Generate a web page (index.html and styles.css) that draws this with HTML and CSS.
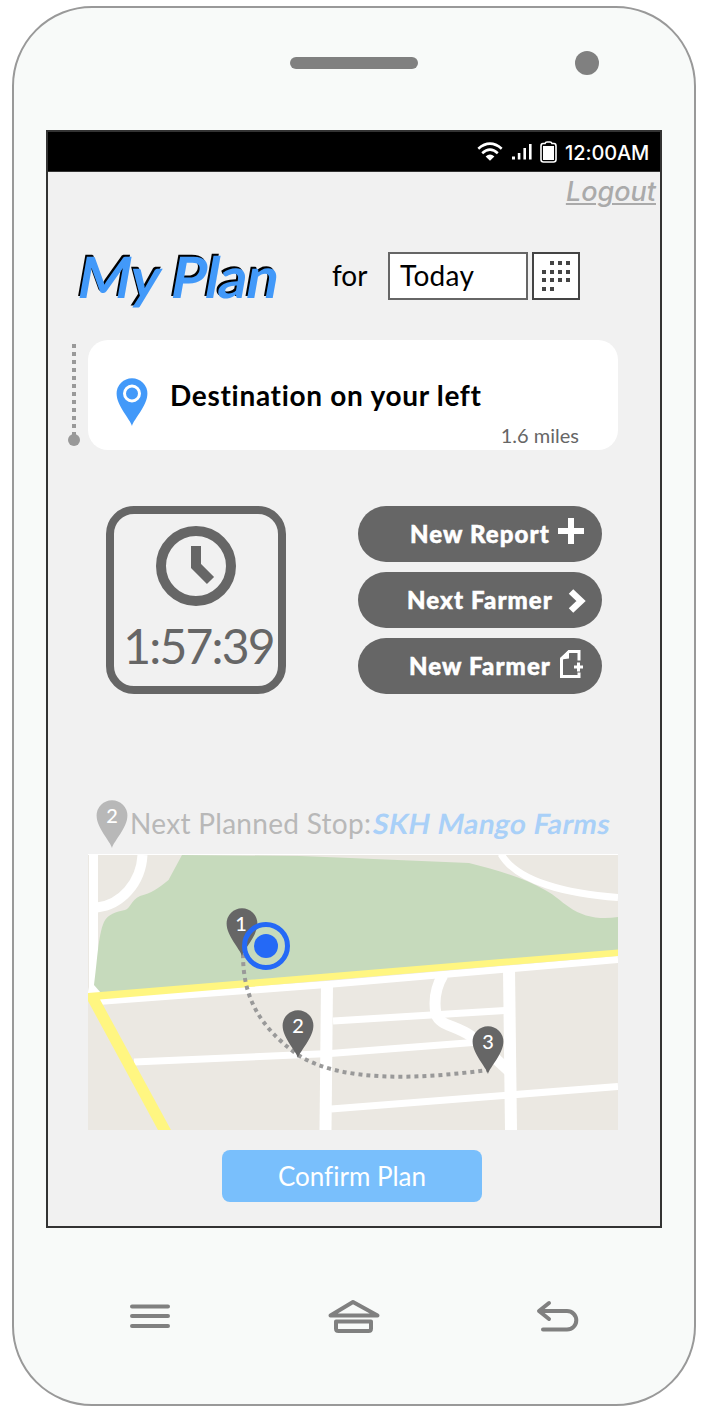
FILE: index.html
```html
<!DOCTYPE html>
<html lang="en">
<head>
<meta charset="utf-8">
<title>My Plan</title>
<link rel="stylesheet" href="styles.css">
</head>
<body>
<svg class="defs" width="0" height="0" aria-hidden="true">
  <symbol id="pin" viewBox="0 0 32 48"><path d="M16 48C14 41 .6 28 .6 15.6A15.4 15.4 0 0 1 31.4 15.6C31.4 28 18 41 16 48Z"/></symbol>
</svg>
<div class="phone">
  <div class="phone-top"><i class="speaker"></i><i class="camera"></i></div>
  <main class="screen">
    <div class="status">
      <svg class="wifi" width="26" height="20" viewBox="0 0 26 20" fill="none" stroke="#fff" stroke-width="2.6"><path d="M1.300 6.700Q13-3.300 24.700 6.700M5.200 11.200Q13 4.200 20.800 11.200"/><path d="M13 18.800L8.600 14.600Q13 10.600 17.400 14.600Z" fill="#fff" stroke="none"/></svg>
      <svg class="signal" width="20" height="16" viewBox="0 0 20 16" fill="#fff"><path d="M0 12.500h3v3H0zM5.800 9h2.600v6.500H5.800zM11.400 4h2.600v11.500h-2.600zM17 0h2.600v15.500H17z"/></svg>
      <svg class="battery" width="17" height="22" viewBox="0 0 17 22"><path d="M3 2.500H5Q5.500 1 7 1H10Q11.500 1 12 2.500H14Q16 2.500 16 5V18.500Q16 21 13.500 21H3.500Q1 21 1 18.500V5Q1 2.500 3 2.500Z" fill="none" stroke="#fff" stroke-width="1.600"/><path d="M3 5H14V19H3Z" fill="#fff"/></svg>
      <span class="clock-text">12:00AM</span>
    </div>
    <div class="logout">Logout</div>
    <div class="title-row">
      <h1 class="title"><span class="slant">My Plan</span></h1>
      <span class="for">for</span>
      <div class="date">Today</div>
      <div class="cal">
        <svg width="44" height="44" viewBox="0 0 44 44" fill="#444"><path d="M16 7h4v4h-4zM24 7h4v4h-4zM32 7h4v4h-4zM8 16h4v4H8zM16 16h4v4h-4zM24 16h4v4h-4zM32 16h4v4h-4zM8 24h4v4H8zM16 24h4v4h-4zM24 24h4v4h-4zM32 24h4v4h-4zM8 33h4v4H8zM16 33h4v4h-4z"/></svg>
      </div>
    </div>
    <section class="nav-row">
      <svg class="trail" width="12" height="102" viewBox="0 0 12 102"><path d="M6 0V92" stroke="#999" stroke-width="4" stroke-dasharray="4 4"/><circle cx="6" cy="96" r="6" fill="#999"/></svg>
      <div class="card">
        <svg class="card-pin" width="32" height="48" viewBox="0 0 32 48"><use href="#pin" fill="#4299f9"/><circle cx="16" cy="15.500" r="7.500" fill="none" stroke="#fff" stroke-width="3"/></svg>
        <span class="dest">Destination on your left</span>
        <span class="miles">1.6 miles</span>
      </div>
    </section>
    <section class="actions">
      <div class="timer">
        <svg width="80" height="80" viewBox="0 0 80 80" fill="none" stroke="#666" stroke-width="10"><circle cx="40" cy="40" r="35"/><path d="M40 20V40L54.500 54.500"/></svg>
        <span class="elapsed">1:57:39</span>
      </div>
      <div class="buttons">
        <div class="btn b1"><span>New Report</span><svg width="26" height="26" viewBox="0 0 26 26"><path d="M13 3V23M3 13H23" stroke="#fff" stroke-width="6" stroke-linecap="square"/></svg></div>
        <div class="btn b2"><span>Next Farmer</span><svg width="18" height="26" viewBox="0 0 18 26"><path d="M3 3.500L13 13L3 22.500" fill="none" stroke="#fff" stroke-width="6.500"/></svg></div>
        <div class="btn b3"><span>New Farmer</span><svg width="24" height="28" viewBox="0 0 24 28" fill="none" stroke="#fff"><path d="M19 10.500V1.500H9L1.500 9V26.500H19V22.500" stroke-width="3"/><path d="M9 0V8.500L1 9.500L0 8Z" fill="#fff" stroke="none"/><path d="M18.500 12.500V21.500M14 17H23" stroke-width="3"/></svg></div>
      </div>
    </section>
    <div class="next">
      <svg width="32" height="48" viewBox="0 0 32 48"><use href="#pin" fill="#b8b8b8"/><text class="pin-n" x="16" y="23">2</text></svg>
      <span class="next-label">Next Planned Stop:</span><span class="farm slant">SKH Mango Farms</span>
    </div>
    <svg class="map" width="530" height="276" viewBox="88 854 530 276">
      <rect x="88" y="854" width="530" height="276" fill="#ebe8e2"/>
      <path d="M93.500 854V993M95 980L103 995H92Z" fill="#fff" stroke="#fff" stroke-width="9"/>
      <path d="M182 855L168.500 880C157 889 152 893 140 896C131 900 130 909 125 910C116 912 108 914 104 922C98 935 97 965 94 985L101 993L618 951V917C600 920 583 917 569 907C560 901 556 896 545 890C524 878 497 870 469 863L350 858L300 856Z" fill="#c6dabc"/>
      <g fill="none" stroke="#fff">
        <path d="M142.500 855C141 883 121 905 97 907.500" stroke-width="10"/>
        <path d="M501 854C517 882 568 894 618 897.500" stroke-width="7"/>
        <path d="M98 1001.500L333 984L618 959.500" stroke-width="7"/>
        <path d="M327 984L325.500 1130" stroke-width="12"/>
        <path d="M509 969L511 1130" stroke-width="12"/>
        <path d="M134 1062L330 1053.500L473 1042.500" stroke-width="7"/>
        <path d="M333 1021L505 1010.500" stroke-width="7"/>
        <path d="M331 1109L618 1086.500" stroke-width="7"/>
        <path d="M443 975C434 990 434 1003 436 1014C440 1026 455 1025 471 1036L510 1072" stroke-width="11"/>
        <path d="M88 854.500H618" stroke-width="1"/>
      </g>
      <path d="M88 993L618 949.500V956L100 999.500L171 1130H158L88 1001Z" fill="#fff681"/>
      <path d="M243 954C243 995 257 1025 298 1055M298 1055C342 1083 420 1079 488 1070" fill="none" stroke="#999" stroke-width="4" stroke-dasharray="4 4"/>
      <g fill="#666">
        <use href="#pin" x="226" y="908" width="32" height="48"/>
        <use href="#pin" x="282" y="1010" width="32" height="48"/>
        <use href="#pin" x="472" y="1026" width="32" height="48"/>
      </g>
      <text class="pin-n" x="241" y="931">1</text>
      <text class="pin-n" x="298" y="1033">2</text>
      <text class="pin-n" x="488" y="1049">3</text>
      <circle cx="266" cy="946" r="21.500" fill="none" stroke="#2469f6" stroke-width="5"/>
      <circle cx="266" cy="946" r="12" fill="#2469f6"/>
    </svg>
    <div class="confirm">Confirm Plan</div>
  </main>
  <div class="keys">
    <svg width="490" height="40" viewBox="109 1296 490 40" fill="none" stroke="#808080" stroke-width="4" stroke-linecap="round" stroke-linejoin="round">
      <path d="M132 1306.500H168M132 1316H168M132 1326H168"/>
      <path d="M330.500 1315.500L353 1302L377.500 1315.500ZM336 1321.500H371V1328.500Q371 1331 368.500 1331H338.500Q336 1331 336 1328.500Z"/>
      <path d="M549 1303L539 1311L549 1319M542 1311H567A9.300 9.300 0 0 1 567 1329.600H543"/>
    </svg>
  </div>
</div>
</body>
</html>
```
FILE: styles.css
```css
* { box-sizing: border-box; }
body { margin: 0; background: #fff; font-family: Lato, "Liberation Sans", sans-serif; font-variant-ligatures: none; color: #000; }
svg { display: block; flex: none; }
.defs { position: absolute; }
.phone span { white-space: nowrap; }
.slant { display: inline-block; transform: skewX(-10deg); }

.phone { width: 684px; height: 1400px; margin: 6px 0 0 12px; border: 2px solid #999; border-radius: 80px; background: #f8faf9; display: flex; flex-direction: column; align-items: center; }
.phone-top { width: 100%; height: 122px; padding: 42px 95px 0 276px; display: flex; justify-content: space-between; align-items: flex-start; }
.speaker { width: 128px; height: 12px; margin-top: 7px; border-radius: 6px; background: #808080; }
.camera { width: 24px; height: 24px; margin-top: 1px; border-radius: 50%; background: #808080; }

.screen { width: 616px; height: 1098px; flex: none; border: 2px solid #333; background: #f1f1f1; display: flex; flex-direction: column; }
.status { height: 40px; flex: none; background: #000; border-bottom: 1px solid #333; color: #fff; display: flex; align-items: flex-start; padding-left: 429px; }
.wifi { margin-top: 10px; }
.signal { margin: 12px 0 0 9px; }
.battery { margin: 9px 0 0 8px; }
.clock-text { margin-left: 8px; font: 500 20px/43px Inter, sans-serif; letter-spacing: -0.1px; }
.logout { height: 80px; flex: none; padding-right: 4px; text-align: right; font: italic 500 27px/40px Inter, sans-serif; color: #aaa; text-decoration: underline; text-decoration-thickness: 2px; text-underline-offset: 2px; }

.title-row { height: 48px; flex: none; display: flex; padding-left: 31px; }
.title { margin: 0; width: 253px; font: 700 57px/48px Lato, sans-serif; letter-spacing: -0.9px; color: #4299f9; text-shadow: -2px -2px 0 #000; }
.for { width: 56px; font-size: 28px; line-height: 46px; }
.date { width: 140px; height: 48px; border: 2px solid #666; background: #fff; padding-left: 10px; font-size: 28px; line-height: 42px; letter-spacing: 0.3px; }
.cal { width: 48px; height: 48px; margin-left: 4px; border: 2px solid #444; background: #fff; }

.nav-row { height: 110px; flex: none; margin: 40px 0 0 20px; display: flex; }
.trail { margin-top: 4px; }
.card { width: 530px; margin-left: 8px; border-radius: 20px; background: #fff; display: grid; grid-template-columns: 82px 1fr; grid-template-rows: 84px 26px; padding-right: 39px; }
.card-pin { margin: 38px 0 0 28px; }
.dest { font-size: 28px; font-weight: 700; line-height: 110px; height: 84px; letter-spacing: 0.7px; }
.miles { grid-column: 2; text-align: right; font-size: 20px; line-height: 23px; color: #666; }

.actions { flex: none; height: 188px; margin: 56px 0 0 58px; display: flex; gap: 72px; }
.timer { width: 180px; height: 188px; border: 8px solid #666; border-radius: 28px; color: #666; display: flex; flex-direction: column; align-items: center; padding-top: 12px; }
.elapsed { font-size: 48px; line-height: 80px; margin-left: 5px; letter-spacing: -1.8px; }
.buttons { display: grid; gap: 10px; }
.btn { width: 244px; height: 56px; border-radius: 28px; background: #666; color: #fff; display: flex; align-items: flex-start; font-size: 24px; font-weight: 900; line-height: 55px; letter-spacing: 1.1px; -webkit-text-stroke: 0.5px #fff; }
.b1 { padding-left: 52px; }
.b2 { padding-left: 49px; }
.b3 { padding-left: 51px; }
.b1 svg { margin: 12px 0 0 8px; }
.b2 svg { margin: 16px 0 0 15px; }
.b3 svg { margin: 12px 0 0 9px; }

.next { flex: none; height: 54px; margin: 106px 0 0 48px; display: flex; font-size: 28px; line-height: 47px; color: #b8b8b8; }
.next-label { margin-left: 2px; letter-spacing: 0.3px; }
.farm { margin-left: 2px; color: #a9d0f8; font-weight: 700; letter-spacing: 0.4px; }
.pin-n { font: 500 20px Lato, sans-serif; fill: #fff; text-anchor: middle; }
.map { margin-left: 40px; }
.confirm { flex: none; width: 260px; height: 52px; margin: 20px 0 0 174px; border-radius: 8px; background: #79bffc; color: #fff; text-align: center; font-size: 26px; line-height: 52px; }
.keys { padding-top: 68px; }
```
